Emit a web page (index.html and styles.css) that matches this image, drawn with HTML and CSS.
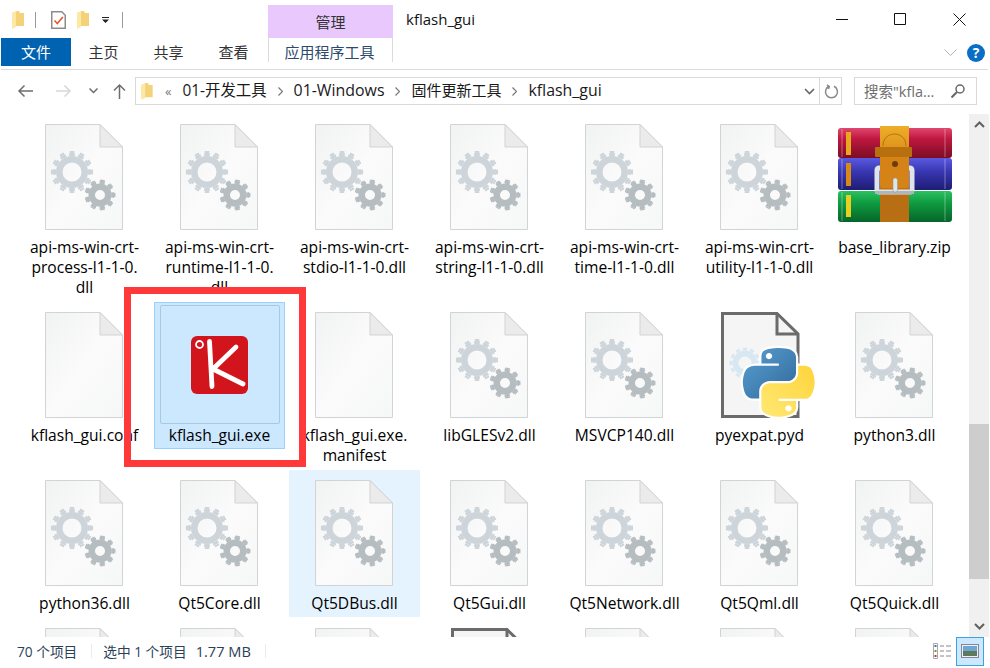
FILE: index.html
```html
<!DOCTYPE html>
<html lang="zh-CN">
<head>
  <meta charset="UTF-8" />
  <title>kflash_gui</title>
  <link rel="stylesheet" href="styles.css">
</head>
<body>
  <svg class="sprites" xmlns="http://www.w3.org/2000/svg">
    <defs>
      <linearGradient id="paper" x1="0" y1="0" x2="1" y2="1">
        <stop offset="0" stop-color="#f1f2f2" />
        <stop offset="0.5" stop-color="#fbfbfb" />
        <stop offset="1" stop-color="#f6f7f7" />
      </linearGradient>
      <linearGradient id="redBook" x1="0" y1="0" x2="0" y2="1">
        <stop offset="0" stop-color="#e0486e" />
        <stop offset="0.35" stop-color="#c01840" />
        <stop offset="1" stop-color="#7c0c24" />
      </linearGradient>
      <linearGradient id="blueBook" x1="0" y1="0" x2="0" y2="1">
        <stop offset="0" stop-color="#5a5ae0" />
        <stop offset="0.4" stop-color="#3a38b4" />
        <stop offset="1" stop-color="#1e1c74" />
      </linearGradient>
      <linearGradient id="greenBook" x1="0" y1="0" x2="0" y2="1">
        <stop offset="0" stop-color="#2cc060" />
        <stop offset="0.4" stop-color="#0e9a40" />
        <stop offset="1" stop-color="#066428" />
      </linearGradient>
      <linearGradient id="belt" x1="0" y1="0" x2="0" y2="1">
        <stop offset="0" stop-color="#eeae28" />
        <stop offset="0.45" stop-color="#d07c14" />
        <stop offset="1" stop-color="#a85c10" />
      </linearGradient>
      <linearGradient id="pyBlue" x1="0" y1="0" x2="1" y2="1">
        <stop offset="0" stop-color="#5a9fd4" />
        <stop offset="1" stop-color="#306998" />
      </linearGradient>
      <linearGradient id="pyYellow" x1="0" y1="1" x2="1" y2="0">
        <stop offset="0" stop-color="#ffe873" />
        <stop offset="1" stop-color="#ffd43b" />
      </linearGradient>
      <filter id="soft"><feGaussianBlur stdDeviation="0.35" /></filter>

      <symbol id="blank-doc" viewBox="0 0 78 106">
        <path d="M.5.5H55L77.5 23v82.500H.5z" fill="url(#paper)" stroke="#d2d3d4" />
        <path d="M55 .5v22.500h22.500z" fill="#ebebeb" stroke="#d2d3d4" />
      </symbol>
      <symbol id="gear-doc" viewBox="0 0 78 106">
        <use href="#blank-doc" width="78" height="106" />
        <g fill="none" filter="url(#soft)">
          <g stroke="#cdd5da">
            <circle cx="27" cy="48" r="12.750" stroke-width="6.500" />
            <circle cx="27" cy="48" r="17.500" stroke-width="3" pathLength="120" stroke-dasharray="6.500 3.500" stroke-dashoffset="3.250" />
            <circle cx="27" cy="48" r="20" stroke-width="2.200" pathLength="120" stroke-dasharray="4.500 5.500" stroke-dashoffset="2.250" />
          </g>
          <g stroke="#b6bdc1">
            <circle cx="55" cy="71" r="8.250" stroke-width="6.500" />
            <circle cx="55" cy="71" r="12.750" stroke-width="3" pathLength="90" stroke-dasharray="6 4" stroke-dashoffset="3" />
            <circle cx="55" cy="71" r="14.750" stroke-width="1.500" pathLength="90" stroke-dasharray="4.500 5.500" stroke-dashoffset="2.250" />
          </g>
        </g>
      </symbol>
      <symbol id="python-doc" viewBox="0 0 98 106">
        <path d="M1.500 1.500H56L77 22v82.500H1.500z" fill="#f5f5f5" stroke="#6b6b6b" stroke-width="3" />
        <path d="M56 1.500V22h21" fill="none" stroke="#6b6b6b" stroke-width="3" />
        <g fill="none" stroke="#d8e8f2">
          <circle cx="24" cy="51" r="9.500" stroke-width="6" />
          <circle cx="24" cy="51" r="14" stroke-width="3" pathLength="120" stroke-dasharray="6 4" stroke-dashoffset="3" />
        </g>
        <g transform="translate(22 36) scale(.645 .61)">
          <path d="M54.900 0C50.300 0 46 .4 42.100 1.100 30.700 3.100 28.600 7.300 28.600 15.100V25.400H55.500V28.900H18.500C10.700 28.900 3.800 33.600 1.700 42.500-.8 52.600-.9 58.900 1.700 69.500 3.600 77.300 8.100 82.900 15.900 82.900H25.100V70.700C25.100 61.900 32.800 54.100 41.900 54.100H68.800C76.200 54.100 82.200 48 82.200 40.500V15.100C82.200 7.900 76.100 2.400 68.800 1.100 64.200.4 59.400 0 54.900 0Z" fill="#fff" stroke="#fff" stroke-width="7" />
          <path d="M85.600 28.900V40.800C85.600 50 77.800 57.800 68.800 57.800H41.900C34.500 57.800 28.500 64.100 28.500 71.500V97C28.500 104.300 34.800 108.500 41.900 110.600 50.400 113.100 58.500 113.500 68.800 110.600 75.500 108.700 82.200 104.800 82.200 97V86.800H55.300V83.300H95.600C103.400 83.300 106.300 77.800 109 69.600 111.800 61.200 111.700 53.100 109 42.400 107.100 34.700 103.400 28.900 95.600 28.900Z" fill="#fff" stroke="#fff" stroke-width="7" />
          <path d="M54.900 0C50.300 0 46 .4 42.100 1.100 30.700 3.100 28.600 7.300 28.600 15.100V25.400H55.500V28.900H18.500C10.700 28.900 3.800 33.600 1.700 42.500-.8 52.600-.9 58.900 1.700 69.500 3.600 77.300 8.100 82.900 15.900 82.900H25.100V70.700C25.100 61.900 32.800 54.100 41.900 54.100H68.800C76.200 54.100 82.200 48 82.200 40.500V15.100C82.200 7.900 76.100 2.400 68.800 1.100 64.200.4 59.400 0 54.900 0ZM40.300 8.200C43.100 8.200 45.300 10.500 45.300 13.300 45.300 16.100 43.100 18.400 40.300 18.400 37.500 18.400 35.300 16.100 35.300 13.300 35.300 10.500 37.500 8.200 40.300 8.200Z" fill="url(#pyBlue)" />
          <path d="M85.600 28.900V40.800C85.600 50 77.800 57.800 68.800 57.800H41.900C34.500 57.800 28.500 64.100 28.500 71.500V97C28.500 104.300 34.800 108.500 41.900 110.600 50.400 113.100 58.500 113.500 68.800 110.600 75.500 108.700 82.200 104.800 82.200 97V86.800H55.300V83.300H95.600C103.400 83.300 106.300 77.800 109 69.600 111.800 61.200 111.700 53.100 109 42.400 107.100 34.700 103.400 28.900 95.600 28.900ZM70.500 93.700C73.300 93.700 75.500 96 75.500 98.800 75.500 101.700 73.300 104 70.500 104 67.700 104 65.500 101.700 65.500 98.800 65.500 96 67.700 93.700 70.500 93.700Z" fill="url(#pyYellow)" />
        </g>
      </symbol>
      <symbol id="folder" viewBox="0 0 12 18">
        <path d="M0 2 5 0h2l1 2h4v13H3l-3 1z" fill="#f4d27a" />
        <path d="M0 2 4 .5V16L0 18z" fill="#fde9a6" />
      </symbol>
    </defs>
  </svg>

  <div class="title-row">
    <div class="qat">
      <svg class="qat-folder" width="12" height="18"><use href="#folder" /></svg>
      <span class="qat-sep"></span>
      <svg class="qat-check" width="15" height="18" viewBox="0 0 15 18">
        <path d="M.75.75h10l3.500 3.500v13H.75z" fill="#fff" stroke="#8c8c8c" stroke-width="1.500" />
        <path d="M3.500 9.500l2.800 3 5.500-6.500" fill="none" stroke="#e8562a" stroke-width="1.600" />
      </svg>
      <svg class="qat-folder2" width="12" height="18"><use href="#folder" /></svg>
      <svg class="qat-drop" width="7" height="6" viewBox="0 0 7 6">
        <path d="M0 0h7v1H0zM0 2.500h7L3.500 6z" fill="#222" />
      </svg>
      <span class="qat-sep qat-sep-end"></span>
    </div>
    <div class="manage-tab">管理</div>
    <div class="window-title">kflash_gui</div>
    <div class="window-btns">
      <svg width="13" height="13" viewBox="0 0 13 13"><path d="M0 6.500h12" stroke="#111" fill="none" /></svg>
      <svg width="13" height="13" viewBox="0 0 13 13"><path d="M.5.500h11v11H.5z" stroke="#111" fill="none" /></svg>
      <svg class="window-close" width="13" height="13" viewBox="0 0 13 13"><path d="M.5.500l12 12M12.500.500l-12 12" stroke="#111" fill="none" /></svg>
    </div>
  </div>

  <div class="ribbon">
    <div class="tab tab-file">文件</div>
    <div class="tab">主页</div>
    <div class="tab">共享</div>
    <div class="tab">查看</div>
    <div class="tab tab-app">应用程序工具</div>
    <svg class="ribbon-collapse" width="13" height="7" viewBox="0 0 13 7"><path d="M.5.500l6 6 6-6" stroke="#b5b5b5" fill="none" /></svg>
    <div class="help">?</div>
  </div>

  <div class="nav">
    <div class="nav-btns">
      <svg class="nav-back" width="16" height="14" viewBox="0 0 16 14"><path d="M16 7H2M7.500 1.500 2 7l5.500 5.500" stroke="#6d6d6d" stroke-width="1.500" fill="none" /></svg>
      <svg class="nav-forward" width="16" height="14" viewBox="0 0 16 14"><path d="M0 7h14M8.500 1.500 14 7l-5.500 5.500" stroke="#d8d8d8" stroke-width="1.500" fill="none" /></svg>
      <svg class="nav-recent" width="9" height="6" viewBox="0 0 9 6"><path d="M.5.500l4 4 4-4" stroke="#6d6d6d" stroke-width="1.500" fill="none" /></svg>
      <svg class="nav-up" width="13" height="16" viewBox="0 0 13 16"><path d="M6.500 16V2M1 7.500 6.500 2 12 7.500" stroke="#6d6d6d" stroke-width="1.500" fill="none" /></svg>
    </div>
    <div class="address">
      <svg class="address-folder" width="12" height="17"><use href="#folder" /></svg>
      <span class="more">«</span>
      <span class="crumb crumb-first">01-开发工具</span>
      <svg class="crumb-sep" width="5" height="9" viewBox="0 0 5 9"><path d="M.5.500l4 4-4 4" stroke="#777" stroke-width="1.200" fill="none" /></svg>
      <span class="crumb">01-Windows</span>
      <svg class="crumb-sep" width="5" height="9" viewBox="0 0 5 9"><path d="M.5.500l4 4-4 4" stroke="#777" stroke-width="1.200" fill="none" /></svg>
      <span class="crumb crumb-cjk">固件更新工具</span>
      <svg class="crumb-sep" width="5" height="9" viewBox="0 0 5 9"><path d="M.5.500l4 4-4 4" stroke="#777" stroke-width="1.200" fill="none" /></svg>
      <span class="crumb">kflash_gui</span>
      <div class="address-end">
        <svg width="11" height="7" viewBox="0 0 11 7"><path d="M1 1l4.500 4.500L10 1" stroke="#666" stroke-width="1.600" fill="none" /></svg>
        <span class="address-div"></span>
        <svg width="15" height="15" viewBox="0 0 15 15"><path d="M10 2.300a6 6 0 1 1-5 0M3 1l2.300 1.500L4.500 5" stroke="#8a8a8a" stroke-width="1.500" fill="none" /></svg>
      </div>
    </div>
    <div class="search">
      <span class="search-text">搜索"kfla...</span>
      <svg width="14" height="14" viewBox="0 0 14 14"><circle cx="9" cy="5" r="4" stroke="#666" stroke-width="1.500" fill="none" /><path d="M6 8l-5.500 5.500" stroke="#666" stroke-width="2" /></svg>
    </div>
  </div>

  <div class="main">
    <div class="files">
      <div class="grid">
        <div class="tile"><svg class="doc"><use href="#gear-doc" /></svg><div class="name">api-ms-win-crt-<br>process-l1-1-0.<br>dll</div></div>
        <div class="tile"><svg class="doc"><use href="#gear-doc" /></svg><div class="name">api-ms-win-crt-<br>runtime-l1-1-0.<br>dll</div></div>
        <div class="tile"><svg class="doc"><use href="#gear-doc" /></svg><div class="name">api-ms-win-crt-<br>stdio-l1-1-0.dll</div></div>
        <div class="tile"><svg class="doc"><use href="#gear-doc" /></svg><div class="name">api-ms-win-crt-<br>string-l1-1-0.dll</div></div>
        <div class="tile"><svg class="doc"><use href="#gear-doc" /></svg><div class="name">api-ms-win-crt-<br>time-l1-1-0.dll</div></div>
        <div class="tile"><svg class="doc"><use href="#gear-doc" /></svg><div class="name">api-ms-win-crt-<br>utility-l1-1-0.dll</div></div>
        <div class="tile">
          <svg class="rar" viewBox="0 0 116 106">
            <rect x="1" y="4" width="114" height="30" rx="3" fill="url(#redBook)" />
            <rect x="1" y="34" width="114" height="32" rx="3" fill="url(#blueBook)" />
            <rect x="1" y="67" width="114" height="31" rx="3" fill="url(#greenBook)" />
            <path d="M108 5v28M108 35v30M108 68v29M5 5v28M5 35v30M5 68v29" stroke="#fff" stroke-opacity=".18" stroke-width="2" />
            <rect x="9" y="8" width="5" height="23" fill="#e8a820" />
            <rect x="9" y="39" width="5" height="23" fill="#d88a18" />
            <rect x="9" y="71" width="5" height="22" fill="#e8d020" />
            <rect x="43" y="2" width="29" height="96" fill="url(#belt)" />
            <path d="M46 22c0-16 23-16 23 0" fill="none" stroke="#b87010" />
            <rect x="38" y="23" width="37" height="10" rx="1" fill="#b8700f" />
            <rect x="40" y="44" width="35" height="24" rx="2" fill="none" stroke="#dfe4e8" stroke-width="5" />
            <path d="M38 67h39v3H38z" fill="#aeb6bc" />
            <rect x="43" y="33" width="29" height="31" rx="3" fill="#d58216" />
            <rect x="43" y="71" width="29" height="27" fill="#b86e12" />
            <circle cx="58" cy="40" r="3" fill="#6e3c08" />
            <rect x="56" y="54" width="4.500" height="14" rx="2" fill="#dfe4e8" stroke="#8a9299" stroke-width=".5" />
          </svg>
          <div class="name">base_library.zip</div>
        </div>

        <div class="tile"><svg class="doc"><use href="#blank-doc" /></svg><div class="name">kflash_gui.conf</div></div>
        <div class="tile tile-selected">
          <div class="thumb">
            <svg class="kflash" width="57" height="58" viewBox="0 0 57 58">
              <rect width="57" height="58" rx="6" fill="#d2151c" />
              <circle cx="8.500" cy="8.500" r="3.500" fill="none" stroke="#fff" stroke-width="1.800" />
              <path d="M18.500 5.500 21 50.500M45 11 22 33l30 15" fill="none" stroke="#fff" stroke-width="4.800" stroke-linecap="round" stroke-linejoin="round" />
            </svg>
          </div>
          <div class="name">kflash_gui.exe</div>
        </div>
        <div class="tile"><svg class="doc"><use href="#blank-doc" /></svg><div class="name">kflash_gui.exe.<br>manifest</div></div>
        <div class="tile"><svg class="doc"><use href="#gear-doc" /></svg><div class="name">libGLESv2.dll</div></div>
        <div class="tile"><svg class="doc"><use href="#gear-doc" /></svg><div class="name">MSVCP140.dll</div></div>
        <div class="tile"><svg class="pydoc"><use href="#python-doc" /></svg><div class="name">pyexpat.pyd</div></div>
        <div class="tile"><svg class="doc"><use href="#gear-doc" /></svg><div class="name">python3.dll</div></div>

        <div class="tile"><svg class="doc"><use href="#gear-doc" /></svg><div class="name">python36.dll</div></div>
        <div class="tile"><svg class="doc"><use href="#gear-doc" /></svg><div class="name">Qt5Core.dll</div></div>
        <div class="tile tile-hover"><svg class="doc"><use href="#gear-doc" /></svg><div class="name">Qt5DBus.dll</div></div>
        <div class="tile"><svg class="doc"><use href="#gear-doc" /></svg><div class="name">Qt5Gui.dll</div></div>
        <div class="tile"><svg class="doc"><use href="#gear-doc" /></svg><div class="name">Qt5Network.dll</div></div>
        <div class="tile"><svg class="doc"><use href="#gear-doc" /></svg><div class="name">Qt5Qml.dll</div></div>
        <div class="tile"><svg class="doc"><use href="#gear-doc" /></svg><div class="name">Qt5Quick.dll</div></div>

        <div class="tile"><svg class="doc"><use href="#gear-doc" /></svg></div>
        <div class="tile"><svg class="doc"><use href="#gear-doc" /></svg></div>
        <div class="tile"><svg class="doc"><use href="#gear-doc" /></svg></div>
        <div class="tile"><svg class="pydoc"><use href="#python-doc" /></svg></div>
        <div class="tile"><svg class="doc"><use href="#gear-doc" /></svg></div>
        <div class="tile"><svg class="doc"><use href="#gear-doc" /></svg></div>
        <div class="tile"><svg class="doc"><use href="#gear-doc" /></svg></div>
      </div>
      <div class="red-box"></div>
    </div>
    <div class="scrollbar">
      <svg class="scroll-up" width="11" height="7" viewBox="0 0 11 7"><path d="M1 6l4.500-4.500L10 6" stroke="#606060" stroke-width="2" fill="none" /></svg>
      <div class="scroll-thumb"></div>
      <svg class="scroll-down" width="11" height="7" viewBox="0 0 11 7"><path d="M1 1l4.500 4.500L10 1" stroke="#606060" stroke-width="2" fill="none" /></svg>
    </div>
  </div>

  <div class="status">
    <span class="status-count">70 个项目</span>
    <span class="status-div"></span>
    <span class="status-selected">选中 1 个项目</span>
    <span class="status-size">1.77 MB</span>
    <span class="status-div"></span>
    <div class="views">
      <svg width="18" height="16" viewBox="0 0 18 16">
        <path d="M.5.500h4v15h-4z" fill="#fff" stroke="#aaa" />
        <rect x="1.500" y="2" width="2" height="2" fill="#3a78b8" />
        <rect x="1.500" y="7" width="2" height="2" fill="#8a8a30" />
        <rect x="1.500" y="12" width="2" height="2" fill="#c03a28" />
        <path d="M7 3h4M13 3h5M7 8h4M13 8h5M7 13h4M13 13h5" stroke="#888" />
      </svg>
      <div class="view-thumb">
        <svg width="18" height="14" viewBox="0 0 18 14">
          <rect x=".5" y=".5" width="17" height="13" fill="#eef" stroke="#888" />
          <rect x="2" y="2" width="14" height="5" fill="#6fa6d6" />
          <rect x="2" y="7" width="14" height="5" fill="#5e7a5a" />
        </svg>
      </div>
    </div>
  </div>
</body>
</html>
```

FILE: styles.css
```css
html, body {
  margin: 0;
  height: 100%;
}

body {
  width: 990px;
  height: 668px;
  overflow: hidden;
  display: flex;
  flex-direction: column;
  background: #fff;
  color: #000;
  font-family: 'Open Sans', 'Noto Sans CJK SC', sans-serif;
  font-size: 15.6px;
}

.sprites {
  position: absolute;
  width: 0;
  height: 0;
}

/* title bar */
.title-row {
  height: 38px;
  display: flex;
}

.qat {
  width: 268px;
  display: flex;
  align-items: center;
  padding-left: 12px;
  padding-top: 1px;
  box-sizing: border-box;
}

.qat-sep {
  width: 1px;
  height: 16px;
  background: #9a9a9a;
  margin-left: 11px;
}

.qat-check {
  margin-left: 15px;
}

.qat-folder2 {
  margin-left: 11px;
}

.qat-drop {
  margin-left: 13px;
}

.qat-sep-end {
  margin-left: 13px;
}

.manage-tab {
  width: 125px;
  height: 33px;
  margin-top: 5px;
  background: #e9c9fd;
  display: flex;
  align-items: center;
  justify-content: center;
  color: #333;
  font-size: 15px;
}

.window-title {
  margin-left: 13px;
  line-height: 38px;
  font-size: 15px;
  color: #111;
}

.window-btns {
  margin-left: auto;
  margin-right: 24px;
  display: flex;
  gap: 45px;
  align-items: center;
}

.window-close {
  margin-left: 1px;
}

/* ribbon tabs */
.ribbon {
  height: 31px;
  margin: 0 2px 0 1px;
  border-bottom: 1px solid #dadbdc;
  display: flex;
  position: relative;
}

.tab {
  width: 65px;
  height: 28px;
  line-height: 28px;
  text-align: center;
  color: #333;
  font-size: 15px;
}

.tab-file {
  width: 70px;
  background: #0063b1;
  color: #fff;
}

.tab-app {
  width: 125px;
  height: 24px;
  margin-left: 2px;
  padding-right: 2px;
  box-sizing: border-box;
  border-left: 1px solid #dadbdc;
  border-right: 1px solid #dadbdc;
  color: #2b4a6e;
  line-height: 28px;
}

.ribbon-collapse {
  margin-left: auto;
  margin-top: 11px;
}

.help {
  width: 18px;
  height: 18px;
  margin: 6px 3px 0 10px;
  border-radius: 50%;
  background: #0a6ec6;
  color: #fff;
  font-size: 14px;
  font-weight: bold;
  line-height: 18px;
  text-align: center;
}

/* address row */
.nav {
  height: 42px;
  box-sizing: border-box;
  padding-top: 7px;
  display: flex;
  align-items: flex-start;
}

.nav-btns {
  width: 135px;
  height: 28px;
  display: flex;
  align-items: center;
}

.nav-back {
  margin-left: 17px;
}

.nav-forward {
  margin-left: 23px;
}

.nav-recent {
  margin-left: 17px;
}

.nav-up {
  margin-left: 15px;
}

.address {
  width: 707px;
  height: 28px;
  box-sizing: border-box;
  border: 1px solid #d9d9d9;
  display: flex;
  align-items: center;
  padding-left: 5px;
  color: #1a1a1a;
  font-size: 15.9px;
}

.more {
  margin-left: 12px;
  margin-right: 11px;
  color: #777;
  font-size: 13px;
}

.crumb {
  padding-bottom: 3px;
}

.crumb-first {
  font-size: 15.4px;
}

.crumb-cjk {
  font-size: 15px;
}

.crumb-sep {
  margin: 0 11px;
}

.address-end {
  margin-left: auto;
  display: flex;
  align-items: center;
  height: 100%;
  gap: 4px;
  padding-right: 2px;
}

.address-div {
  width: 1px;
  height: 100%;
  background: #d9d9d9;
}

.search {
  width: 123px;
  height: 28px;
  margin-left: 12px;
  box-sizing: border-box;
  border: 1px solid #d9d9d9;
  display: flex;
  align-items: center;
  justify-content: space-between;
  padding: 0 11px 0 9px;
  color: #6d6d6d;
  font-size: 14.5px;
}

.search-text {
  padding-bottom: 2px;
}

/* file area */
.main {
  flex: 1;
  min-height: 0;
  display: flex;
}

.files {
  position: relative;
  width: 969px;
  overflow: hidden;
}

.grid {
  display: grid;
  grid-template-columns: repeat(7, 131px);
  column-gap: 4px;
  row-gap: 1px;
  align-items: start;
  padding: 2px 0 0 19px;
}

.tile {
  box-sizing: border-box;
  border: 1px solid transparent;
  padding: 9px 0 3px;
  display: flex;
  flex-direction: column;
  align-items: center;
}

.tile-hover {
  background: #e5f3ff;
}

.tile-selected {
  background: #cce8ff;
  border-color: #99d1ff;
}

.doc {
  width: 78px;
  height: 106px;
  margin-left: -1px;
}

.rar {
  width: 116px;
  height: 106px;
}

.pydoc {
  width: 98px;
  height: 106px;
  margin-left: 21px;
}

.thumb {
  width: 120px;
  height: 119px;
  margin: -7px 0 -6px;
  box-sizing: border-box;
  border: 1px solid #a9c9e0;
  border-radius: 2px;
  display: flex;
  align-items: center;
  justify-content: center;
}

.name {
  margin-top: 7px;
  line-height: 20px;
  text-align: center;
  white-space: nowrap;
}

.red-box {
  position: absolute;
  left: 124px;
  top: 175px;
  width: 182px;
  height: 180px;
  box-sizing: border-box;
  border: 7px solid #ff3939;
}

/* scrollbar */
.scrollbar {
  width: 20px;
  margin-top: 2px;
  background: #f0f0f0;
  display: flex;
  flex-direction: column;
  align-items: center;
}

.scroll-up {
  margin-top: 7px;
}

.scroll-thumb {
  width: 100%;
  height: 155px;
  margin-top: 296px;
  background: #cdcdcd;
}

.scroll-down {
  margin-top: auto;
  margin-bottom: 7px;
}

/* status bar */
.status {
  height: 31px;
  flex-shrink: 0;
  box-sizing: border-box;
  padding-bottom: 3px;
  display: flex;
  align-items: center;
  color: #2b3f57;
  font-size: 13.7px;
}

.status-count {
  margin-left: 17px;
}

.status-div {
  width: 1px;
  height: 14px;
  background: #ececec;
  margin: 0 11px 0 14px;
}

.status-size {
  margin-left: 9px;
  font-size: 14.6px;
}

.views {
  margin-left: auto;
  margin-right: 6px;
  display: flex;
  align-items: center;
  gap: 5px;
}

.view-thumb {
  width: 28px;
  height: 29px;
  box-sizing: border-box;
  border: 1px solid #3ea2e2;
  background: #cce8ff;
  display: flex;
  align-items: center;
  justify-content: center;
}
```
